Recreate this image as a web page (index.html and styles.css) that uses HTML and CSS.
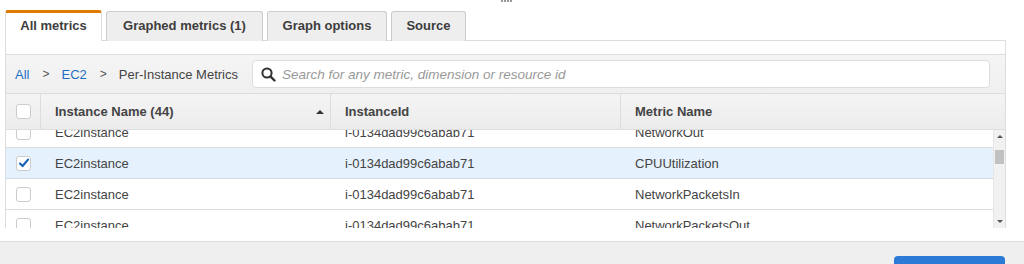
FILE: index.html
```html
<!DOCTYPE html>
<html lang="en">

<head>
    <meta charset="UTF-8">
    <title>All metrics</title>
    <meta name="viewport" content="width=device-width, initial-scale=1.0">
    <link rel="stylesheet" href="styles.css">
</head>

<body>

    <div class="grip"></div>

    <div class="tabs">
        <div class="tab active">All metrics</div>
        <div class="tab graphed">Graphed metrics (1)</div>
        <div class="tab options">Graph options</div>
        <div class="tab source">Source</div>
    </div>

    <div class="panel">
        <div class="crumbs">
            <a class="crumb-link">All</a>
            <span class="sep">&gt;</span>
            <a class="crumb-link">EC2</a>
            <span class="sep">&gt;</span>
            <span class="crumb-here">Per-Instance Metrics</span>
            <div class="search">
                <svg width="15" height="15" viewBox="0 0 15 15">
                    <circle cx="6" cy="6" r="4.6" fill="none" stroke="#333" stroke-width="2"/>
                    <line x1="9.4" y1="9.4" x2="13.5" y2="13.5" stroke="#333" stroke-width="2.4" stroke-linecap="round"/>
                </svg>
                <span class="placeholder">Search for any metric, dimension or resource id</span>
            </div>
        </div>

        <div class="head">
            <div class="cell check-cell"><span class="box"></span></div>
            <div class="cell col">Instance Name (44)<span class="sort"></span></div>
            <div class="cell col">InstanceId</div>
            <div class="cell col">Metric Name</div>
        </div>

        <div class="body">
            <div class="viewport">
                <div class="rows">
                    <div class="row">
                        <div class="check-cell"><span class="box"></span></div>
                        <div class="txt">EC2instance</div>
                        <div class="txt">i-0134dad99c6abab71</div>
                        <div class="txt">NetworkOut</div>
                    </div>
                    <div class="row selected">
                        <div class="check-cell">
                            <span class="box">
                                <svg width="12" height="12" viewBox="0 0 12 12">
                                    <path d="M2 6.5 L4.6 9 L10 2.6" fill="none" stroke="#1a62b8" stroke-width="2.2" stroke-linecap="round" stroke-linejoin="round"/>
                                </svg>
                            </span>
                        </div>
                        <div class="txt">EC2instance</div>
                        <div class="txt">i-0134dad99c6abab71</div>
                        <div class="txt">CPUUtilization</div>
                    </div>
                    <div class="row">
                        <div class="check-cell"><span class="box"></span></div>
                        <div class="txt">EC2instance</div>
                        <div class="txt">i-0134dad99c6abab71</div>
                        <div class="txt">NetworkPacketsIn</div>
                    </div>
                    <div class="row">
                        <div class="check-cell"><span class="box"></span></div>
                        <div class="txt">EC2instance</div>
                        <div class="txt">i-0134dad99c6abab71</div>
                        <div class="txt">NetworkPacketsOut</div>
                    </div>
                </div>
            </div>
            <div class="scrollbar">
                <span class="arrow up"></span>
                <span class="thumb"></span>
                <span class="arrow down"></span>
            </div>
        </div>
    </div>

    <footer>
        <button class="primary"></button>
    </footer>

</body>
</html>
```

FILE: styles.css
```css
* {
    box-sizing: border-box;
    margin: 0;
    padding: 0;
}

html, body {
    width: 100%;
    height: 100%;
    overflow: hidden;
    background: #fff;
    color: #444;
    font-family: 'Liberation Sans', Arial, sans-serif;
    font-size: 13px;
}

/* little drag handle cut off at the top */
.grip {
    position: absolute;
    top: 0;
    left: 501px;
    width: 11px;
    height: 2px;
    background: repeating-linear-gradient(90deg, #999 0 2px, transparent 2px 3px);
}

.tabs {
    display: flex;
    gap: 4px;
    padding: 10px 0 0 5px;
    height: 41px;
    position: relative;
    z-index: 2;
}

.tab {
    height: 30px;
    margin-top: 1px;
    padding-bottom: 2px;
    display: flex;
    align-items: center;
    justify-content: center;
    font-weight: bold;
    color: #3d3d3d;
    background: #eee;
    border: 1px solid #ccc;
    border-bottom: none;
    border-radius: 3px 3px 0 0;
}

.tab.graphed { width: 157px; }
.tab.options { width: 120px; }
.tab.source { width: 75px; }

.tab.active {
    margin-top: 0;
    height: 31px;
    width: 97px;
    padding-bottom: 4px;
    background: #fff;
    border-color: #ddd;
    border-top: 3px solid #e07b00;
}

.panel {
    margin-left: 5px;
    width: 1001px;
    height: 188px;
    border: 1px solid #ddd;
    border-bottom: none;
    margin-top: -1px;
    padding-top: 13px;
}

.crumbs {
    display: flex;
    align-items: center;
    height: 39px;
    padding: 0 15px 0 9px;
    border-top: 1px solid #ddd;
    background: linear-gradient(#f5f5f5, #efefef);
}

.crumb-link {
    color: #1f6fc5;
}

.sep {
    color: #555;
    font-size: 12px;
    margin: 0 12px 0 13px;
}

.crumb-here {
    color: #444;
}

.search {
    flex: 1;
    margin-left: 14px;
    height: 28px;
    display: flex;
    align-items: center;
    gap: 6px;
    padding-left: 8px;
    background: #fff;
    border: 1px solid #ddd;
    border-radius: 4px;
}

.placeholder {
    color: #999;
    font-style: italic;
    font-size: 13.5px;
}

.head {
    display: grid;
    grid-template-columns: 34px 290px 290px 1fr;
    height: 37px;
    border-top: 1px solid #ddd;
    border-bottom: 1px solid #ddd;
    background: linear-gradient(#f4f4f4, #ececec);
    font-weight: bold;
}

.cell {
    display: flex;
    align-items: center;
}

.col {
    padding-left: 14px;
    border-left: 1px solid #ddd;
    position: relative;
}

.sort {
    position: absolute;
    right: 6px;
    top: 16px;
    border-left: 4px solid transparent;
    border-right: 4px solid transparent;
    border-bottom: 4px solid #333;
}

.check-cell {
    display: flex;
    align-items: center;
    padding-left: 10px;
}

.box {
    width: 15px;
    height: 15px;
    border: 1px solid #ccc;
    border-radius: 3px;
    background: #fff;
    display: flex;
    align-items: center;
    justify-content: center;
}

.body {
    display: flex;
    height: 98px;
}

.viewport {
    flex: 1;
    overflow: hidden;
}

/* list scrolled down a little */
.rows {
    margin-top: -13px;
}

.row {
    display: grid;
    grid-template-columns: 34px 290px 290px 1fr;
    height: 31px;
    border-bottom: 1px solid #ddd;
    background: #fff;
}

.row.selected {
    background: #e5f1fc;
    border-bottom-color: #cfdbe6;
}

.txt {
    display: flex;
    align-items: center;
    padding-left: 15px;
}

.scrollbar {
    width: 12px;
    background: #f1f1f1;
    border-left: 1px solid #e6e6e6;
    display: flex;
    flex-direction: column;
    align-items: center;
    padding-top: 5px;
}

.arrow {
    border-left: 3px solid transparent;
    border-right: 3px solid transparent;
}

.arrow.up {
    border-bottom: 3px solid #555;
}

.arrow.down {
    margin-top: auto;
    margin-bottom: 5px;
    border-top: 3px solid #555;
}

.thumb {
    width: 9px;
    height: 14px;
    margin-top: 12px;
    background: #c1c1c1;
}

footer {
    margin-top: 13px;
    height: 23px;
    overflow: hidden;
    border-top: 1px solid #ddd;
    background: #efefef;
    display: flex;
    justify-content: flex-end;
    align-items: flex-start;
    padding: 14px 19px 0 0;
}

.primary {
    flex: none;
    width: 111px;
    height: 30px;
    border: none;
    border-radius: 4px;
    background: #2b7bd6;
}
```
